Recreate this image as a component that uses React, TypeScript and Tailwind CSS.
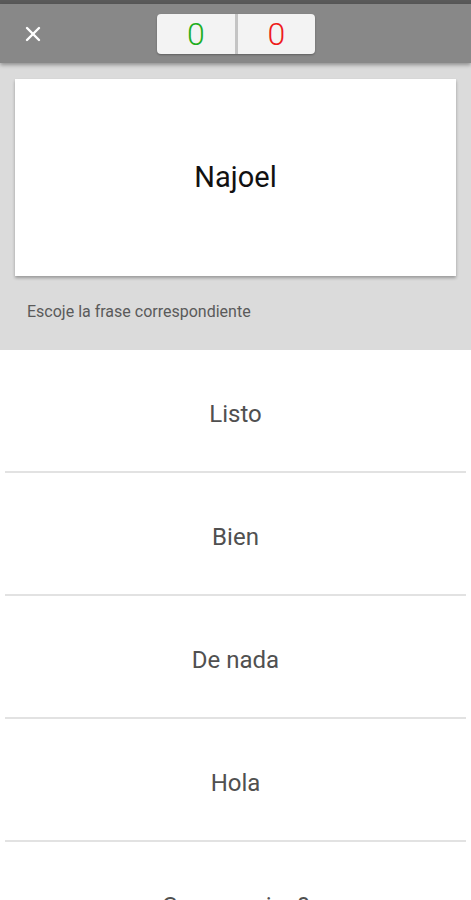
import { X } from "lucide-react";

const options = ["Listo", "Bien", "De nada", "Hola", "Con permiso?"];

export default function App() {
  return (
    <div
      className="flex h-[900px] w-full flex-col overflow-hidden bg-white"
      style={{ fontFamily: "Roboto, 'Noto Sans', sans-serif" }}
    >
      {/* barra superior */}
      <div className="h-[4px] shrink-0 bg-[#5a5a5a]" />
      <header className="relative z-10 flex h-[59px] shrink-0 items-center bg-[#888888] shadow-[0_2px_4px_rgba(0,0,0,0.35)]">
        <button className="ml-[21px] flex h-[24px] w-[24px] items-center justify-center text-white">
          <X size={26} strokeWidth={2.4} />
        </button>
        <div className="ml-[112px] flex h-[40px] w-[158px] overflow-hidden rounded-[4px] bg-[#f3f3f3] shadow-[0_1px_2px_rgba(0,0,0,0.3)]">
          <div className="flex flex-1 items-center justify-center text-[32px] font-light leading-none text-[#1fae1f]">
            0
          </div>
          <div className="w-[3px] bg-[#c4c4c4]" />
          <div className="flex flex-1 items-center justify-center text-[32px] font-light leading-none text-[#ee1b1b]">
            0
          </div>
        </div>
      </header>

      {/* tarjeta de la pregunta */}
      <section className="shrink-0 bg-[#dbdbdb] px-[15px] pb-[26px] pt-[16px]">
        <div className="flex h-[197px] items-center justify-center bg-white shadow-[0_2px_3px_rgba(0,0,0,0.3)]">
          <span className="text-[29px] text-[#111111]">Najoel</span>
        </div>
        <p className="mt-[24px] pl-[12px] text-[16px] text-[#5a5a5a]">
          Escoje la frase correspondiente
        </p>
      </section>

      {/* opciones */}
      <ul className="flex shrink-0 flex-col">
        {options.map((o) => (
          <li key={o}>
            <div className="flex h-[121px] items-center justify-center pt-[6px] text-[24px] text-[#505050]">
              {o}
            </div>
            <div className="mx-[5px] h-[2px] bg-[#e2e2e2]" />
          </li>
        ))}
      </ul>
    </div>
  );
}
